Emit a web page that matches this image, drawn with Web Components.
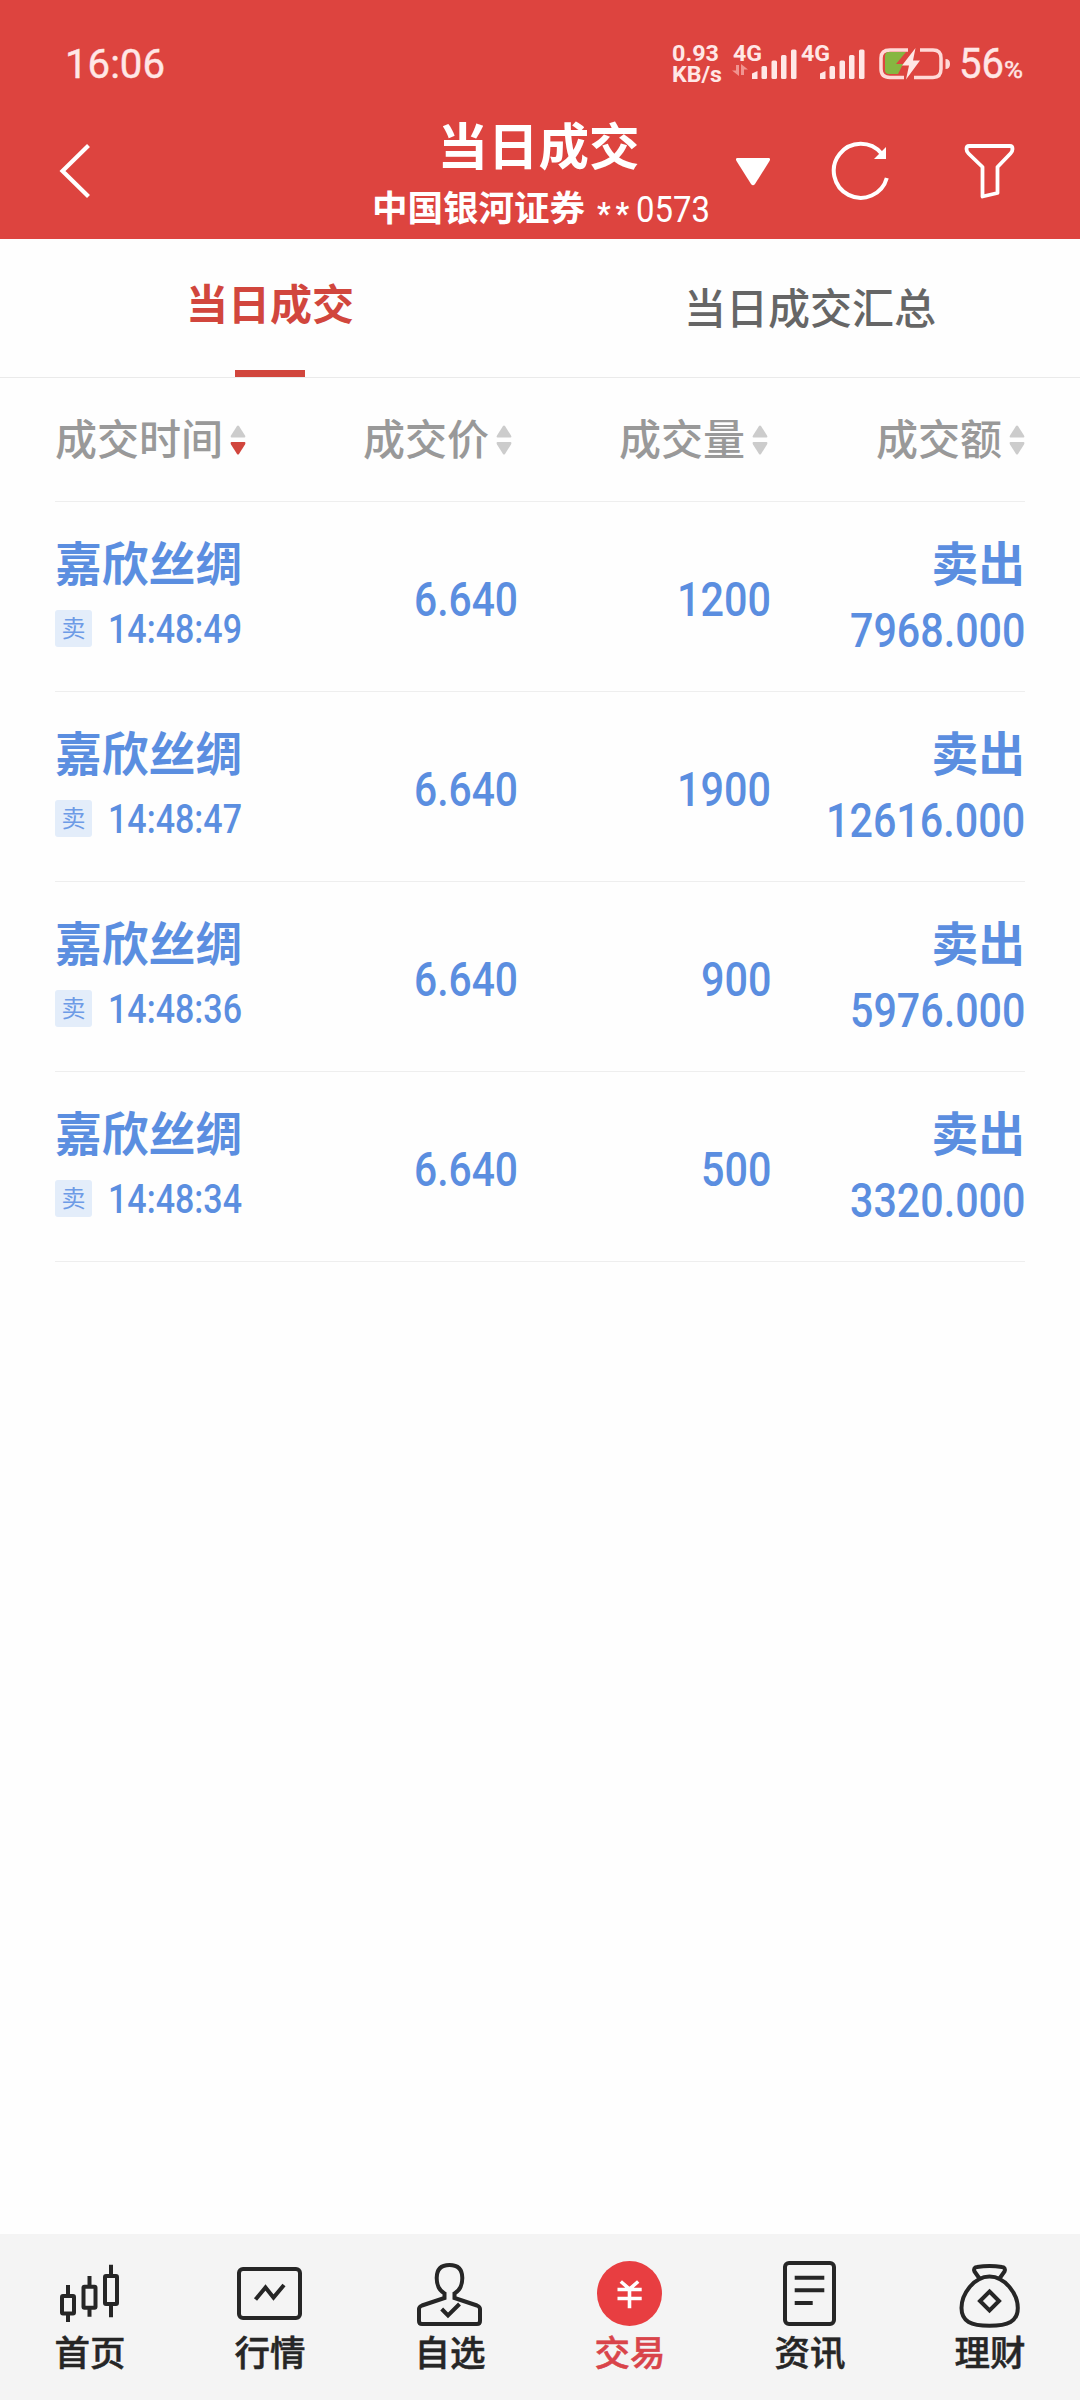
<!DOCTYPE html>
<html lang="zh-CN">
<head>
<meta charset="utf-8">
<meta name="viewport" content="width=1080">
<title>当日成交</title>
<style>
  html, body { margin: 0; padding: 0; background: #fefefe; }
  body { font-family: Roboto, "Noto Sans CJK SC", sans-serif; }
</style>
</head>
<body>
<trade-app></trade-app>

<script>
// text squeezed horizontally to a given width, for the narrow digits
class FitText extends HTMLElement {
  connectedCallback() {
    const root = this.attachShadow({ mode: "open" });
    root.innerHTML = `
      <style>
        :host { display: inline-block; white-space: nowrap; flex: none; }
        span { display: inline-block; transform-origin: 0 50%; }
      </style>
      <span><slot></slot></span>`;
    const span = root.querySelector("span");
    const width = parseFloat(this.getAttribute("width"));
    const natural = span.getBoundingClientRect().width;
    this.style.width = `${width}px`;
    span.style.transform = `scaleX(${width / natural})`;
  }
}
customElements.define("fit-text", FitText);

const SIGNAL = `
  <svg width="46" height="32" viewBox="0 0 46 32" fill="#ffe7e6">
    <path d="M1 25.500L6.500 23V31H1z"/>
    <rect x="10.500" y="18" width="5.500" height="13" rx="1.500"/>
    <rect x="20.500" y="12.500" width="5.500" height="18.500" rx="1.500"/>
    <rect x="30" y="7" width="5.500" height="24" rx="1.500"/>
    <rect x="40" y="1.500" width="5.500" height="29.500" rx="1.500"/>
  </svg>`;

class StatusBar extends HTMLElement {
  connectedCallback() {
    this.attachShadow({ mode: "open" }).innerHTML = `
      <style>
        :host { display: flex; align-items: flex-start; height: 104px; box-sizing: border-box; color: #ffe7e6; padding: 0 57px 0 65px; }
        svg { display: block; flex: none; }
        .clock { margin-top: 39px; font-size: 41px; line-height: 50px; font-weight: 400; -webkit-text-stroke: 0.4px currentColor; }
        .speed { display: flex; flex-direction: column; margin: 43px 10px 0 auto; font-size: 22.500px; line-height: 21px; font-weight: 700; width: 51px; }
        .sim { display: grid; grid-template-columns: 18px 46px; width: 64px; margin: 48px 4px 0 0; }
        .sim > * { grid-row: 1; }
        .net { grid-column: 1; font-size: 22px; line-height: 22px; font-weight: 700; margin-top: -5px; }
        .sim > div:last-child { grid-column: 2; }
        .data { margin: -2px 0 0 -1px; }
        .battery { margin: 47px 8px 0 10px; }
        .level { display: flex; align-items: baseline; margin-top: 39px; line-height: 50px; font-size: 42px; font-weight: 400; -webkit-text-stroke: 0.4px currentColor; }
        .level small { font-size: 24px; }
      </style>
      <fit-text class="clock" width="100">16:06</fit-text>
      <div class="speed"><fit-text width="47">0.93</fit-text><fit-text width="50">KB/s</fit-text></div>
      <div class="sim">
        <div class="net"><fit-text width="29">4G</fit-text>
          <svg class="data" width="18" height="14" viewBox="0 0 18 14" fill="#f09490"><path d="M4 2H7V13L0 7.500H4zM9 1L16 6.500H12V12H9z"/></svg>
        </div>
        <div>${SIGNAL}</div>
      </div>
      <div class="sim">
        <div class="net"><fit-text width="29">4G</fit-text></div>
        <div>${SIGNAL}</div>
      </div>
      <svg class="battery" width="72" height="34" viewBox="0 0 72 34">
        <path d="M29 3H11Q2 3 2 11V22Q2 30.500 11 30.500H25M41 3H54Q62 3 62 11V22Q62 30.500 54 30.500H35" fill="none" stroke="#ffd9d7" stroke-width="3.500"/>
        <path d="M66.500 12Q71 12 71 17T66.500 22z" fill="#ffd9d7"/>
        <path d="M10 5H27L17 17H24L19 27H10Q6 27 6 23V9Q6 5 10 5z" fill="#86b641"/>
        <path d="M36.500 1L23 18.500H30L27 32.500L41 13.500H34z" fill="#ffe7e6"/>
      </svg>
      <div class="level"><fit-text width="45">56</fit-text><small><fit-text width="19">%</fit-text></small></div>`;
  }
}
customElements.define("status-bar", StatusBar);

class NavBar extends HTMLElement {
  connectedCallback() {
    this.attachShadow({ mode: "open" }).innerHTML = `
      <style>
        :host { display: grid; grid-template-columns: 1fr auto 1fr; height: 135px; color: #fff; }
        svg { display: block; }
        .back { margin: 37px 0 0 57px; }
        .mid { display: flex; flex-direction: column; align-items: center; }
        .title { font-size: 50.500px; line-height: 60px; font-weight: 700; margin: 14px 3px 0 0; }
        .sub { display: flex; align-items: center; height: 46px; margin: 8px 0 0 2px; font-size: 36px; line-height: 46px; }
        .broker { font-size: 35.500px; font-weight: 700; }
        .stars { margin-left: 12px; font-size: 31px; font-weight: 700; letter-spacing: 5px; transform: translateY(5px); }
        .no { margin-left: 2px; transform: translateY(0.500px); }
        .tools { display: flex; justify-content: flex-end; padding: 34px 64px 0 0; }
        .tools svg:nth-child(1) { margin: 18px 59px 0 0; }
        .tools svg:nth-child(2) { margin-right: 72px; }
      </style>
      <svg class="back" width="36" height="60" viewBox="0 0 36 60"><path d="M31.500 4.500L5.500 30L31.500 55.500" fill="none" stroke="#fff" stroke-width="4.200"/></svg>
      <div class="mid">
        <div class="title"><slot name="title"></slot></div>
        <div class="sub">
          <span class="broker"><slot name="broker"></slot></span>
          <fit-text class="stars" width="37">**</fit-text>
          <fit-text class="no" width="74"><slot name="account"></slot></fit-text>
        </div>
      </div>
      <div class="tools">
        <svg width="36" height="32" viewBox="0 0 36 32"><path d="M2.500 2H33.500Q36 2 34.500 5L20 28Q18 30.500 16 28L1.500 5Q0 2 2.500 2z" fill="#fff"/></svg>
        <svg width="62" height="64" viewBox="0 0 62 64">
          <path d="M56.800 40A27 27 0 1 1 51.500 15.500" fill="none" stroke="#fff" stroke-width="4"/>
          <path d="M56 9V21H44z" fill="#fff"/>
        </svg>
        <svg width="52" height="64" viewBox="0 0 52 64"><path d="M5 8H46Q48.500 8 48.500 11Q48.500 13.500 46.500 15.500L33.500 29V55L18.500 58.500V29L4.500 15.500Q2.500 13.500 2.500 11Q2.500 8 5 8z" fill="none" stroke="#fff" stroke-width="3.800" stroke-linejoin="round"/></svg>
      </div>`;
  }
}
customElements.define("nav-bar", NavBar);

class TabItem extends HTMLElement {
  connectedCallback() {
    this.attachShadow({ mode: "open" }).innerHTML = `
      <style>
        :host { display: flex; flex: 1; flex-direction: column; align-items: center; justify-content: space-between; padding-top: 41px; box-sizing: border-box; color: #666; font-size: 42px; line-height: 60px; font-weight: 500; }
        :host([active]) { padding-top: 37px; color: #d1463d; font-weight: 700; }
        i { width: 70px; height: 7px; }
        :host([active]) i { background: #d1463d; }
      </style>
      <slot></slot><i></i>`;
  }
}
customElements.define("tab-item", TabItem);

// one sortable column title; sort="down" paints the lower arrow red
class SortHead extends HTMLElement {
  connectedCallback() {
    const down = this.getAttribute("sort") === "down" ? "#d1463d" : "#ccc";
    this.attachShadow({ mode: "open" }).innerHTML = `
      <style>
        :host { display: flex; align-items: center; gap: 7px; color: #999; font-size: 42px; line-height: 60px; font-weight: 500; white-space: nowrap; }
        span { padding-top: 3px; }
        svg { display: block; flex: none; }
      </style>
      <span><slot></slot></span>
      <svg width="16" height="30" viewBox="0 0 16 30">
        <path d="M7 1Q8 0 9 1L15 10.500Q16 12.500 14.500 12.500H1.500Q0 12.500 1 10.500z" fill="#ccc"/>
        <path d="M7 29Q8 30 9 29L15 19.500Q16 17 14.500 17H1.500Q0 17 1 19.500z" fill="${down}"/>
      </svg>`;
  }
}
customElements.define("sort-head", SortHead);

class DealRow extends HTMLElement {
  connectedCallback() {
    const d = this.data;
    this.attachShadow({ mode: "open" }).innerHTML = `
      <style>
        :host { display: grid; grid-template-columns: 210px 253px 253px 254px; height: 190px; box-sizing: border-box; border-bottom: 1px solid #eee; color: #5b8ee0; font-size: 48px; font-weight: 500; }
        .cell { display: flex; flex-direction: column; align-items: flex-end; }
        .first { align-items: flex-start; }
        .name { font-size: 46.800px; font-weight: 700; line-height: 64px; margin-top: 31px; white-space: nowrap; }
        .sub { display: flex; align-items: center; gap: 16px; margin-top: 11px; height: 40px; }
        .badge { width: 37px; height: 37px; border-radius: 3px; background: #e3edfa; color: #6d9be6; font-size: 24px; line-height: 38px; font-weight: 400; text-align: center; }
        .time { font-size: 40px; line-height: 40px; padding-top: 3px; }
        .num { line-height: 60px; margin-top: 68px; }
        .sum { line-height: 60px; margin-top: 4px; }
      </style>
      <div class="cell first">
        <div class="name">${d.name}</div>
        <div class="sub"><span class="badge">卖</span><fit-text class="time" width="134">${d.time}</fit-text></div>
      </div>
      <div class="cell"><fit-text class="num" width="104">${d.price}</fit-text></div>
      <div class="cell"><fit-text class="num" width="${d.count.length * 23.5}">${d.count}</fit-text></div>
      <div class="cell">
        <div class="name">卖出</div>
        <fit-text class="sum" width="${(d.sum.length - 1) * 23.7 + 9.5}">${d.sum}</fit-text>
      </div>`;
  }
}
customElements.define("deal-row", DealRow);

const ICONS = {
  home: `
    <rect x="8" y="38" width="12" height="17.500" rx="1"/><path d="M14 27V38M14 56V64"/>
    <rect x="29.500" y="28.700" width="12" height="21" rx="1"/><path d="M35.500 18V28M35.500 50V58.700"/>
    <rect x="51" y="18" width="12" height="28" rx="1"/><path d="M57 6.700V17M57 47V59.300"/>`,
  quote: `<rect x="5" y="11" width="61" height="49" rx="4"/><path d="M21.500 41.500L31.500 29.500L39.500 39.500L50 27"/>`,
  user: `
    <path d="M30.500 40V35.500Q22.700 31 22.700 20Q22.700 7 35.500 7T48.300 20Q48.300 31 40.500 35.500V40L63 47.500Q66 48.700 66 51V63Q66 66 63 66H8Q5 66 5 63V51Q5 48.700 8 47.500z"/>
    <path d="M27.700 51L34 57.500L45.500 46"/>`,
  trade: `
    <circle cx="35.500" cy="35.500" r="32.500" fill="#e83e41" stroke="none"/>
    <path d="M26.800 23.500L35.500 31L44.200 23.500M23.500 31.500H47.700M23.500 40.500H47.700M35.500 31V50.300" stroke="#fff" stroke-width="3.600"/>`,
  news: `<rect x="11" y="5" width="49" height="61" rx="4"/><path d="M20.700 19.700H50.300M20.700 32.300H50.300M20.700 45H38.700"/>`,
  wealth: `
    <path d="M35.500 18.500C20 18.500 7.500 36 7.500 50C7.500 63.500 17 67.700 35.500 67.700S63.800 63.500 63.800 50C63.800 36 51 18.500 35.500 18.500z"/>
    <path d="M25.500 20.500L20.500 13.500Q19 9.500 23 9Q35.500 7 48 9Q52 9.500 50.500 13.500L45.500 20.500"/>
    <path d="M35.500 33.500L45 43L35.500 52.500L26 43z"/>`,
};

class BottomItem extends HTMLElement {
  connectedCallback() {
    this.attachShadow({ mode: "open" }).innerHTML = `
      <style>
        :host { display: flex; flex: 1; flex-direction: column; align-items: center; padding-top: 24px; color: #262626; font-size: 35.500px; line-height: 44px; font-weight: 500; }
        :host([active]) { color: #d9444a; }
        svg { display: block; fill: none; stroke: #262626; stroke-width: 4; }
        span { padding-top: 2px; -webkit-text-stroke: 0.5px currentColor; }
      </style>
      <svg width="72" height="72" viewBox="0 0 72 72">${ICONS[this.getAttribute("icon")]}</svg>
      <span><slot></slot></span>`;
  }
}
customElements.define("bottom-item", BottomItem);

const DEALS = [
  { name: "嘉欣丝绸", time: "14:48:49", price: "6.640", count: "1200", sum: "7968.000" },
  { name: "嘉欣丝绸", time: "14:48:47", price: "6.640", count: "1900", sum: "12616.000" },
  { name: "嘉欣丝绸", time: "14:48:36", price: "6.640", count: "900", sum: "5976.000" },
  { name: "嘉欣丝绸", time: "14:48:34", price: "6.640", count: "500", sum: "3320.000" },
];

class TradeApp extends HTMLElement {
  connectedCallback() {
    const root = this.attachShadow({ mode: "open" });
    root.innerHTML = `
      <style>
        :host { display: flex; flex-direction: column; width: 1080px; height: 2400px; background: #fefefe; }
        header { background: #dd443f; height: 239px; }
        nav { display: flex; height: 139px; box-sizing: border-box; border-bottom: 1px solid #eaeaea; }
        main { flex: 1; padding: 0 55px; }
        .heads { display: grid; grid-template-columns: 210px 253px 253px 254px; height: 124px; box-sizing: border-box; border-bottom: 1px solid #eee; align-items: center; }
        .heads > :not(:first-child) { justify-self: end; }
        .heads > :nth-child(2) { margin-right: 6px; }
        .heads > :nth-child(3) { margin-right: 3px; }
        footer { display: flex; height: 166px; background: #f4f4f4; }
      </style>
      <header>
        <status-bar></status-bar>
        <nav-bar>
          <span slot="title">当日成交</span>
          <span slot="broker">中国银河证券</span>
          <span slot="account">0573</span>
        </nav-bar>
      </header>
      <nav>
        <tab-item active>当日成交</tab-item>
        <tab-item>当日成交汇总</tab-item>
      </nav>
      <main>
        <div class="heads">
          <sort-head sort="down">成交时间</sort-head>
          <sort-head>成交价</sort-head>
          <sort-head>成交量</sort-head>
          <sort-head>成交额</sort-head>
        </div>
      </main>
      <footer>
        <bottom-item icon="home">首页</bottom-item>
        <bottom-item icon="quote">行情</bottom-item>
        <bottom-item icon="user">自选</bottom-item>
        <bottom-item icon="trade" active>交易</bottom-item>
        <bottom-item icon="news">资讯</bottom-item>
        <bottom-item icon="wealth">理财</bottom-item>
      </footer>`;
    const main = root.querySelector("main");
    for (const deal of DEALS) {
      const row = document.createElement("deal-row");
      row.data = deal;
      main.append(row);
    }
  }
}
customElements.define("trade-app", TradeApp);
</script>
</body>
</html>
